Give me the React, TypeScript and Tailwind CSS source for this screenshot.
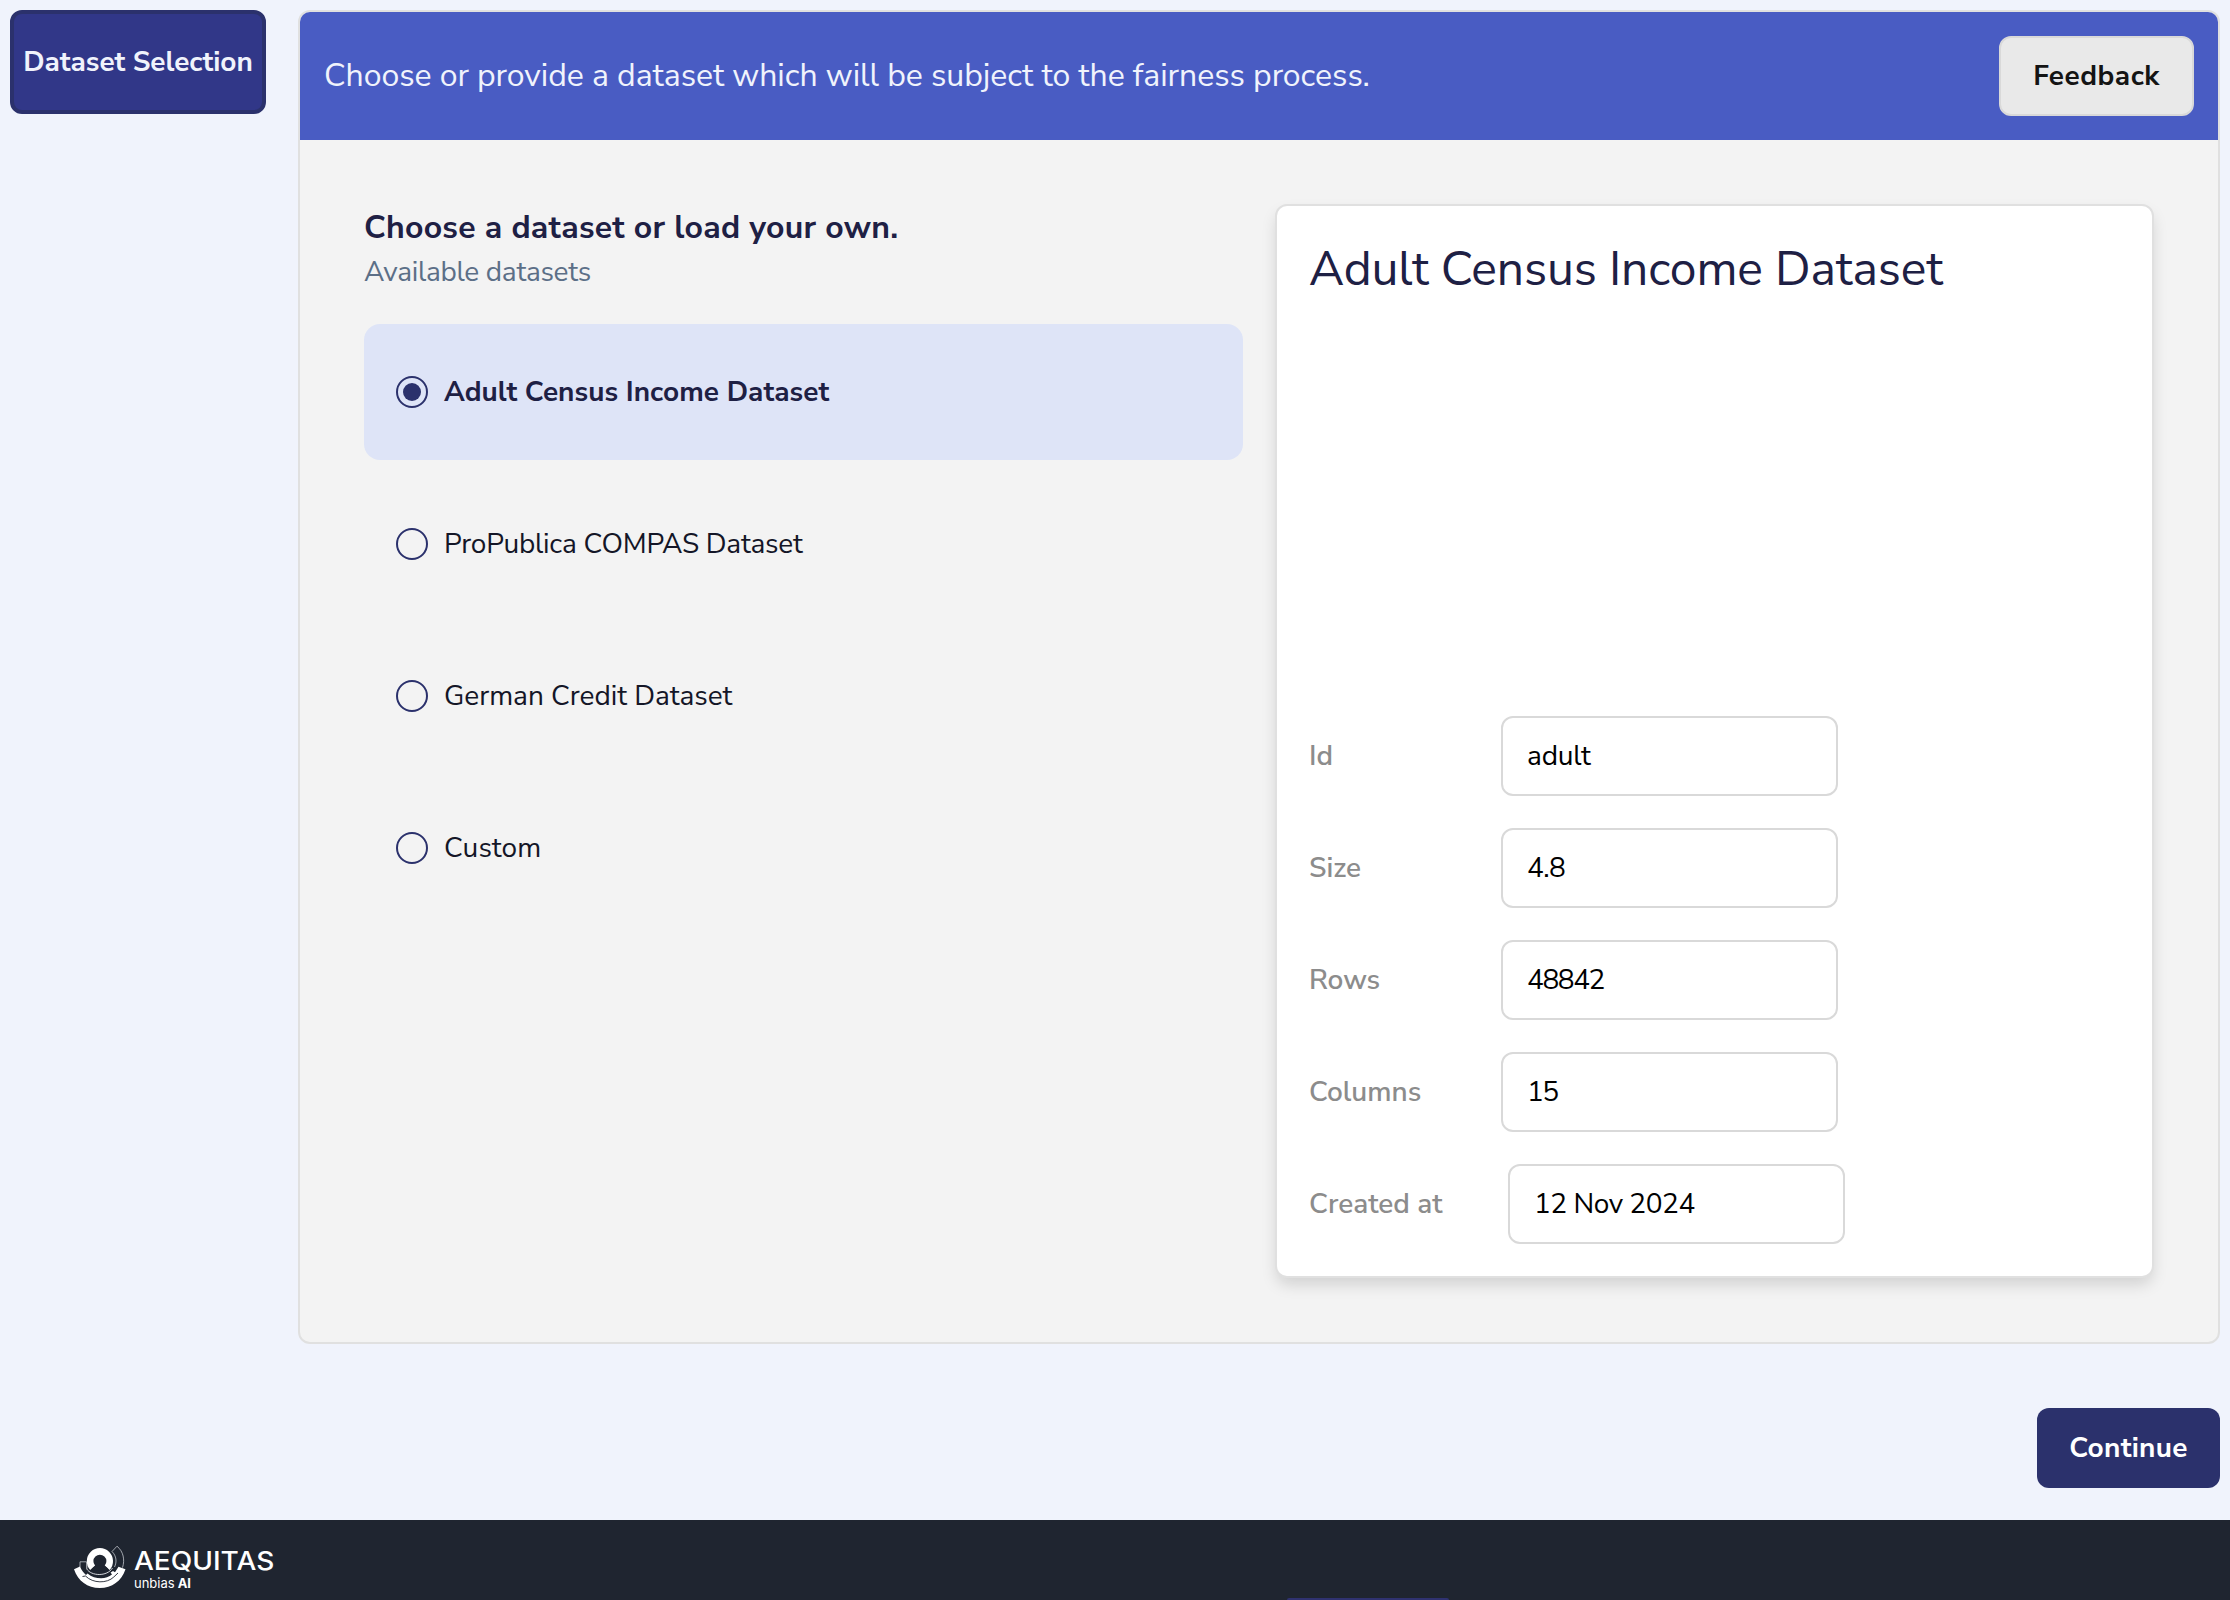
import type { ReactNode } from "react";

const font = "font-['Nunito_Sans','Lato',sans-serif]";

function Label({ children, className = "" }: { children: ReactNode; className?: string }) {
  return <span className={`block whitespace-nowrap ${className}`}>{children}</span>;
}

const datasets = [
  { name: "Adult Census Income Dataset", spacing: "tracking-[0.04px]", selected: true },
  { name: "ProPublica COMPAS Dataset", spacing: "tracking-[-0.24px]", selected: false },
  { name: "German Credit Dataset", spacing: "tracking-[-0.03px]", selected: false },
  { name: "Custom", spacing: "tracking-[0.1px]", selected: false },
];

const fields = [
  { label: "Id", value: "adult", spacing: "tracking-[-0.2px]", labelWidth: "w-[192px]" },
  { label: "Size", value: "4.8", spacing: "tracking-[-0.6px]", labelWidth: "w-[192px]" },
  { label: "Rows", value: "48842", spacing: "tracking-[-1.4px]", labelWidth: "w-[192px]" },
  { label: "Columns", value: "15", spacing: "tracking-[-1.5px]", labelWidth: "w-[192px]" },
  { label: "Created at", value: "12 Nov 2024", spacing: "tracking-[-0.45px]", labelWidth: "w-[199px]" },
];

function Radio({ selected }: { selected: boolean }) {
  return (
    <span className="flex size-8 shrink-0 items-center justify-center rounded-full border-2 border-[#2b316c]">
      {selected && <span className="size-[18px] rounded-full bg-[#2b316c]" />}
    </span>
  );
}

function LogoMark() {
  return (
    <svg viewBox="0 0 66 56" className="h-14 w-[66px]" fill="none">
      {/* head ring, open at the bottom */}
      <path d="M26.600 27.700 A9.800 9.800 0 1 1 41.200 27.700" stroke="#fff" strokeWidth="6.600" />
      {/* neck */}
      <path d="M25.500 30.500 C26 27.500 28.500 26.500 31 25.500 H37 C39.500 26.500 42 27.500 42.500 30.500 Z" fill="#1f2530" />
      {/* thin inner arc */}
      <path d="M20.800 22 V29 C25 36 41 37 46.500 28" stroke="#e5e7eb" strokeWidth="0.9" />
      {/* left bracket outline */}
      <path d="M20.800 21.800 H14 V27" stroke="#c3c7cd" strokeWidth="0.8" />
      {/* right orbit outline */}
      <path
        d="M46 11.500 L51 6.200 C57.500 11.500 59 20 56.500 27.600 M46 11.500 C50.500 16 51 22 48.500 27"
        stroke="#c3c7cd"
        strokeWidth="0.8"
      />
      {/* outer bowl */}
      <path
        fill="#fff"
        d="M8 29.200 L14 26.600 C16 31 17.500 33 20 35 L21.500 33.400 C29 39.600 40 39.600 46 34.600 L44.600 32.600 L47 31 L49 32.200 L52.500 26.800 L59.500 29.200 C55.500 41 46 48 33.800 48 C21.500 48 12 41 8 29.200 Z"
      />
      {/* seams between the bowl's layers */}
      <path d="M16.500 36.500 L19.500 36 C27 43.600 41 43.600 47.800 37 L52 33" stroke="#1f2530" strokeWidth="0.9" />
    </svg>
  );
}

export default function App() {
  return (
    <div className={`flex h-[1600px] w-[2230px] flex-col overflow-hidden bg-[#f0f3fc] text-[28px] leading-8 ${font}`}>
      <main className="flex h-[1520px] shrink-0 items-start px-[10px] pt-[10px]">
        <nav className="w-[288px] shrink-0">
          <button className="flex h-[104px] w-64 items-center justify-center rounded-xl border-4 border-[#2b316c] bg-[#313788] text-[#f0f3fc]">
            <Label className="font-bold tracking-[-0.05px]">Dataset Selection</Label>
          </button>
        </nav>
        <div className="flex w-[1922px] flex-col">
          <section className="flex h-[1334px] flex-col overflow-hidden rounded-xl border-2 border-[#e0e0e0] bg-[#f3f3f3]">
            <header className="flex h-32 shrink-0 items-center justify-between bg-[#495cc3] px-6">
              <Label className="text-[32px] tracking-[-0.04px] text-[#f0f3fc]">
                Choose or provide a dataset which will be subject to the fairness process.
              </Label>
              <button className="flex h-20 w-[195px] items-center justify-center rounded-xl border-2 border-[#d9d9d9] bg-[#e9e9e9] text-[#141414]">
                <Label className="font-bold tracking-[0.5px]">Feedback</Label>
              </button>
            </header>
            <div className="flex gap-8 pt-16 pl-16">
              <div className="w-[879px]">
                <h2 className="h-12 text-[32px] leading-[48px] font-bold tracking-[0.26px] text-[#1e2044]">
                  Choose a dataset or load your own.
                </h2>
                <p className="h-10 leading-10 tracking-[-0.3px] text-[#5c6f87]">Available datasets</p>
                <ul className="mt-8 flex flex-col gap-4">
                  {datasets.map((d) => (
                    <li
                      key={d.name}
                      className={`flex h-[136px] items-center gap-4 rounded-2xl px-8 ${
                        d.selected ? "bg-[#dee4f7] font-bold text-[#1e2044]" : "text-[#141627]"
                      }`}
                    >
                      <Radio selected={d.selected} />
                      <Label className={d.spacing}>{d.name}</Label>
                    </li>
                  ))}
                </ul>
              </div>
              <article className="flex h-[1074px] w-[879px] flex-col justify-between rounded-xl border-2 border-[#e0e0e0] bg-white p-8 shadow-[0_8px_16px_-2px_rgba(0,0,0,0.15)]">
                <h1 className="h-[62px] text-[48px] leading-[62px] whitespace-nowrap tracking-[-0.12px] text-[#1e2044]">
                  Adult Census Income Dataset
                </h1>
                <dl className="flex flex-col gap-8">
                  {fields.map((f) => (
                    <div key={f.label} className="flex items-center">
                      <dt className={`shrink-0 font-semibold text-[#8c8c8c] ${f.labelWidth}`}>{f.label}</dt>
                      <dd className="flex h-20 w-[337px] items-center rounded-xl border-2 border-[#d9d9d9] bg-white px-6 text-black">
                        <Label className={f.spacing}>{f.value}</Label>
                      </dd>
                    </div>
                  ))}
                </dl>
              </article>
            </div>
          </section>
          <button className="mt-16 flex h-20 w-[183px] items-center justify-center self-end rounded-xl bg-[#2b316c] text-white">
            <Label className="font-bold tracking-[0.3px]">Continue</Label>
          </button>
        </div>
      </main>
      <footer className="flex h-20 shrink-0 flex-col justify-between bg-[#1f2530] pt-5">
        <div className="flex h-14 pl-[66px] text-white">
          <LogoMark />
          <div className="flex flex-col pt-[10px] pl-[2px]">
            <span className="h-[22px] w-[124px] origin-left scale-x-[1.12] font-['Inter',sans-serif] text-[25px] leading-[22px] font-medium">
              AEQUITAS
            </span>
            <span className="mt-[3px] flex h-4 gap-[3px] font-['Inter',sans-serif] text-[13px] leading-4">
              <span>unbias</span>
              <b>AI</b>
            </span>
          </div>
        </div>
        <div className="ml-[1287px] h-[2px] w-[162px] shrink-0 rounded-t-sm bg-[#2f3270]" />
      </footer>
    </div>
  );
}
